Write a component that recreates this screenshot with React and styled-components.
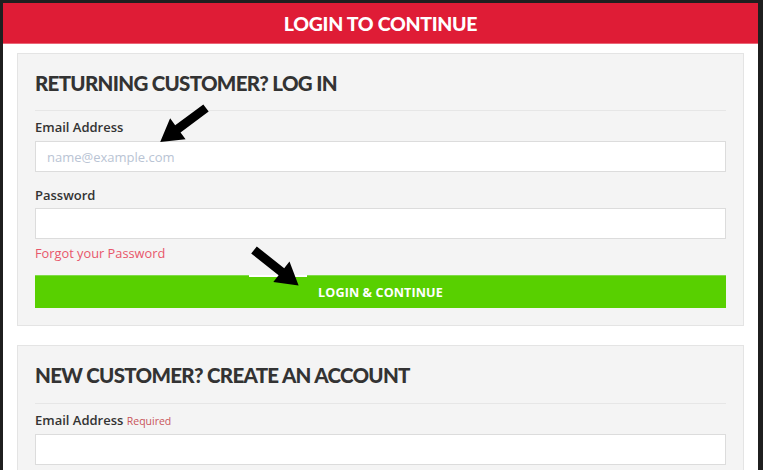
import React from "react";
import styled, { createGlobalStyle } from "styled-components";

const Global = createGlobalStyle`
  html, body { margin: 0; padding: 0; background: #1f1f1f; }
  body { font-family: "Open Sans", "Liberation Sans", sans-serif; }
  * { box-sizing: border-box; }
`;

const Page = styled.div`
  position: relative;
  width: 763px;
  height: 470px;
  overflow: hidden;
  padding: 3px 5px 0 3px;
  background: #1f1f1f;
`;

const Modal = styled.div`
  background: #fff;
  height: 100%;
`;

const Header = styled.div`
  height: 41px;
  background: #df1c36;
  border-bottom: 1px solid #ea6677;
  color: #fff;
  font-family: "Lato", "Open Sans", sans-serif;
  font-weight: 900;
  font-size: 19.5px;
  letter-spacing: -0.3px;
  display: flex;
  align-items: center;
  justify-content: center;
`;

const Body = styled.div`
  padding: 9px 14px 0 14px;
  display: flex;
  flex-direction: column;
  gap: 19px;
`;

const Panel = styled.section`
  background: #f4f4f4;
  border: 1px solid #e4e4e4;
  padding: 17px;
  display: flex;
  flex-direction: column;
`;

const Heading = styled.h2`
  margin: 0;
  font-family: "Lato", "Open Sans", sans-serif;
  font-weight: 900;
  font-size: 20.5px;
  line-height: 24px;
  color: #333;
  letter-spacing: -0.7px;
  padding-bottom: ${(p) => p.$pb || 15}px;
  border-bottom: 1px solid #e6e6e6;
`;

const Label = styled.label`
  display: block;
  margin-top: ${(p) => p.$mt || 0}px;
  margin-bottom: ${(p) => p.$mb || 5}px;
  font-size: 13px;
  line-height: 18px;
  font-weight: 600;
  color: #333;
`;

const Required = styled.span`
  font-size: 10.5px;
  font-weight: 400;
  color: #c8555a;
`;

const Input = styled.input`
  display: block;
  width: 100%;
  height: 31px;
  border: 1px solid #dcdcdc;
  background: #fff;
  padding: 0 11px;
  font-family: "Open Sans", sans-serif;
  font-size: 13px;
  color: #333;
  outline: none;
  &::placeholder { color: #b9c4d4; }
`;

const Forgot = styled.a`
  display: block;
  margin-top: 5px;
  font-size: 12.8px;
  line-height: 18px;
  color: #e8566b;
  text-decoration: none;
`;

const Button = styled.button`
  margin-top: 13px;
  height: 33px;
  width: 100%;
  border: none;
  border-top: 1px solid #7fdc47;
  background: #58d000;
  color: #fff;
  font-family: "Open Sans", sans-serif;
  font-weight: 700;
  font-size: 12.6px;
  letter-spacing: 0.1px;
  display: flex;
  align-items: center;
  justify-content: center;
`;

const Overlay = styled.svg`
  position: absolute;
  left: 0;
  top: 0;
  pointer-events: none;
`;

const arrowPts = "0,-4.5 35,-4.5 35,-13 57,0 35,13 35,4.5 0,4.5";

export default function App() {
  return (
    <>
      <Global />
      <Page>
        <Modal>
          <Header>LOGIN TO CONTINUE</Header>
          <Body>
            <Panel>
              <Heading>RETURNING CUSTOMER? LOG IN</Heading>
              <Label $mt={7}>Email Address</Label>
              <Input placeholder="name@example.com" />
              <Label $mt={14} $mb={4}>Password</Label>
              <Input type="password" />
              <Forgot href="#">Forgot your Password</Forgot>
              <Button>LOGIN &amp; CONTINUE</Button>
            </Panel>
            <Panel>
              <Heading $pb={16}>NEW CUSTOMER? CREATE AN ACCOUNT</Heading>
              <Label $mt={7} $mb={4}>
                Email Address <Required>Required</Required>
              </Label>
              <Input />
            </Panel>
          </Body>
        </Modal>
        <Overlay width="763" height="470" viewBox="0 0 763 470">
          <rect x="249" y="275" width="58" height="2" fill="#fff" />
          <polygon points={arrowPts} fill="#000" transform="translate(206,108) rotate(143.5)" />
          <polygon points={arrowPts} fill="#000" transform="translate(254,250) rotate(38.5)" />
        </Overlay>
      </Page>
    </>
  );
}
